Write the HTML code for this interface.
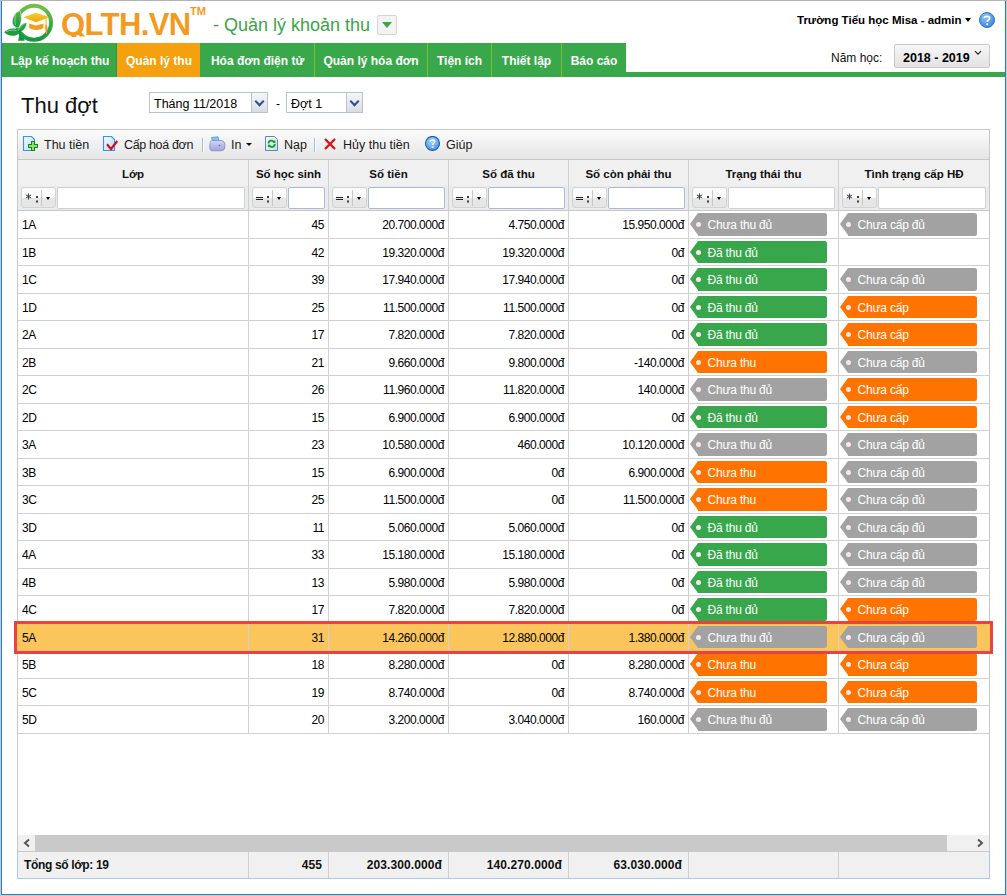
<!DOCTYPE html>
<html><head><meta charset="utf-8"><title>QLTH</title>
<style>
*{box-sizing:border-box;margin:0;padding:0}
html,body{width:1007px;height:896px;overflow:hidden;background:#fff;font-family:"Liberation Sans",sans-serif;color:#000}
.a{position:absolute}
/* frame */
#fT{left:0;top:0;width:1007px;height:1px;background:#b4b4b4}
#fL0{left:0;top:1px;width:1px;height:895px;background:#d3c8bd}
#fL1{left:1px;top:1px;width:1px;height:894px;background:#1883d7}
#fR0{left:1006px;top:1px;width:1px;height:895px;background:#d3c8bd}
#fR1{left:1005px;top:1px;width:1px;height:894px;background:#1883d7}
#fB0{left:0;top:895px;width:1007px;height:1px;background:#d3c8bd}
#fB1{left:1px;top:894px;width:1005px;height:1px;background:#1883d7}
/* header */
#brand{left:61px;top:5.3px;height:32px;overflow:hidden;font-weight:bold;font-size:31px;line-height:40px;color:#f39a22;letter-spacing:-0.6px;white-space:nowrap}
#tm{left:190px;top:5px;font-weight:bold;font-size:11px;line-height:12px;color:#f39a22}
#sub{left:213px;top:12px;font-size:18px;line-height:26px;color:#3aa548;white-space:nowrap}
#subbtn{left:377px;top:15px;width:20px;height:20px;border:1px solid #d4d4d4;background:#f3f3f3;border-radius:2px}
#subbtn:after{content:"";position:absolute;left:4px;top:6px;border-left:5.5px solid transparent;border-right:5.5px solid transparent;border-top:6px solid #3aa548}
#user{left:797px;top:12px;font-weight:bold;font-size:11.5px;line-height:16px;white-space:nowrap}
#usertri{left:965px;top:18px;border-left:3.5px solid transparent;border-right:3.5px solid transparent;border-top:4px solid #000;width:0;height:0}
/* tabs */
#tabs{left:2px;top:43px;height:34px;width:1003px}
.tab{position:absolute;top:43px;height:34px;background:#39a84a;color:#fff;font-weight:bold;font-size:12px;line-height:35px;text-align:center;white-space:nowrap;padding-left:1px;padding-top:1px}
.tab.on{background:#f5a00f}
.tsep{position:absolute;top:43px;width:1px;height:34px;background:#7cbf34}
#gbar{left:2px;top:72px;width:1003px;height:5px;background:#39a84a}
#nh{left:831px;top:49.5px;font-size:12px;line-height:16px;white-space:nowrap;color:#111}
#nhbox{left:894px;top:44px;width:96px;height:24px;padding-top:1.5px;border:1px solid #c9c9c9;border-radius:2px;background:linear-gradient(#f6f6f6,#e3e3e3);font-weight:bold;font-size:12.5px;line-height:22px;padding-left:8px;white-space:nowrap}
#nhchev{left:974px;top:50px}
/* title */
#title{left:21px;top:92px;font-size:22px;line-height:28px;color:#111;white-space:nowrap}
.combo{position:absolute;height:21px;border:1px solid #b9c3cf;background:#fff;font-size:12.5px;line-height:19px;padding-left:4px;padding-top:2px;white-space:nowrap;color:#000}
.cbtn{position:absolute;top:-1px;margin-top:0;right:-1px;width:17px;height:21px;border:1px solid #b9c3cf;background:linear-gradient(#f5f6f8,#d9dde3)}
.cbtn:after{content:"";position:absolute;left:4px;top:5px;width:5px;height:5px;border-right:2px solid #2b4f91;border-bottom:2px solid #2b4f91;transform:rotate(45deg)}
#dash{left:276px;top:96px;font-size:12px;line-height:16px}
/* grid */
#gridL{left:17px;top:129px;width:1px;height:723px;background:#c8c8c8}
#gridR{left:989px;top:129px;width:1px;height:723px;background:#c8c8c8}
#tb{left:17px;top:129px;width:973px;height:31px;border:1px solid #c8c8c8;background:linear-gradient(#fbfbfb,#e5e5e5)}
.tbt{position:absolute;top:137px;font-size:12.5px;line-height:16px;color:#1a1a1a;white-space:nowrap;letter-spacing:0px}
.tbsep{position:absolute;top:138px;width:1px;height:14px;background:#93c4f0;box-shadow:1px 0 0 #fff}
#hdr{left:18px;top:160px;width:971px;height:50px;background:#f0f0f0}
#frow{left:18px;top:186px;width:971px;height:24px;background:#eaebed}
#hdrb{left:17px;top:210px;width:973px;height:1px;background:#c8c8c8}
.hc{position:absolute;top:165px;font-weight:bold;font-size:11.5px;line-height:18px;text-align:center;white-space:nowrap;color:#111}
.vl{position:absolute;top:160px;width:1px;background:#d0d0d0}
.op{position:absolute;top:187px;width:35px;height:21px;border:1px solid #d2d2d2;border-radius:3px;background:linear-gradient(#fbfbfb 0,#fbfbfb 50%,#e6e6e6 50%,#e6e6e6 100%);color:#222}
.op b{position:absolute;left:18.5px;top:2px;width:1px;height:16px;background:#c8c8c8}
.op i{position:absolute;left:23.6px;top:9px;border-left:2.8px solid transparent;border-right:2.8px solid transparent;border-top:3.3px solid #000}
.op .eq{position:absolute;left:2.5px;top:9px;width:7px;height:3.2px;border-top:1.1px solid #222;border-bottom:1.1px solid #222}
.op svg{position:absolute;left:2.5px;top:4.5px}
.op .co{position:absolute;left:14.2px;top:8px;width:2px;height:2px;background:#3a3a3a;box-shadow:0 4.5px 0 #3a3a3a}
.fi{position:absolute;top:187px;height:21.5px;border:1px solid #b3b8d2;border-radius:2px;background:#fff}
.fi.gy{border-color:#d0d0d0}
.row{position:absolute;left:17px;width:973px;height:27.5px;border-bottom:1px solid #d0d0d0}
.row.sel{background:#fcc55c;border-bottom:1px dotted #bcc5d0}
.c{position:absolute;top:0;height:26.5px;line-height:26.5px;padding-top:1px;font-size:12px;letter-spacing:-0.45px;white-space:nowrap;color:#000;border-right:1px solid #d0d0d0}
.c.l{padding-left:4px}
.c.r{text-align:right;padding-right:4px}
.tag{position:absolute;top:2.3px;height:22.5px;width:129px;color:#fff;font-size:12px;letter-spacing:-0.2px;line-height:22px;padding-left:9.5px;padding-top:1px;white-space:nowrap;border-radius:0 2.5px 2.5px 0}
.tag:before{content:"";position:absolute;left:-8px;top:0;border-top:11.25px solid transparent;border-bottom:11.25px solid transparent;border-right:8px solid currentColor}
.tag i{position:absolute;left:-2.3px;top:9px;width:5px;height:5px;border-radius:50%;background:#f8e6ea}
.tag.g{background:#a2a2a2}
.tag.g:before{border-right-color:#a2a2a2}
.tag.v{background:#38a64b}
.tag.v:before{border-right-color:#38a64b}
.tag.o{background:#ff7400}
.tag.o:before{border-right-color:#ff7400}
#redbox{left:14px;top:621px;width:979px;height:33px;border:3px solid #e8433d}
/* scrollbar & footer */
#sb{left:18px;top:835px;width:971px;height:16px;background:#f0f0f0}
#sbth{left:35px;top:835px;width:912px;height:16px;background:#c9c9c9}
#sbline{left:17px;top:851px;width:973px;height:1px;background:#c8c8c8}
#ft{left:17px;top:852px;width:973px;height:27px;background:#f0f0f0;border-left:1px solid #a9c8ee;border-bottom:1px solid #a9c8ee;border-right:1px solid #a9c8ee}
.fc{position:absolute;top:852px;height:26px;line-height:26px;font-weight:bold;font-size:12px;letter-spacing:0.1px;white-space:nowrap;color:#111}
.fv{position:absolute;top:852px;width:1px;height:26px;background:#d0d0d0}

</style></head><body>
<div class="a" id="fT"></div><div class="a" id="fL0"></div><div class="a" id="fL1"></div><div class="a" id="fR0"></div><div class="a" id="fR1"></div><div class="a" id="fB0"></div><div class="a" id="fB1"></div>

<svg class="a" style="left:0;top:0" width="60" height="45" viewBox="0 0 60 45">
  <defs>
    <linearGradient id="lg1" x1="0" y1="0" x2="0" y2="1"><stop offset="0" stop-color="#72bf47"/><stop offset="1" stop-color="#119a3e"/></linearGradient>
    <linearGradient id="lf" x1="0" y1="0" x2="0" y2="1"><stop offset="0" stop-color="#5bb54a"/><stop offset="1" stop-color="#13963f"/></linearGradient>
    <linearGradient id="cap" x1="0" y1="0" x2="0" y2="1"><stop offset="0" stop-color="#f3d21d"/><stop offset="1" stop-color="#f2a11b"/></linearGradient>
  </defs>
  <circle cx="34" cy="22.7" r="17" fill="none" stroke="url(#lg1)" stroke-width="4"/>
  <path d="M19.6 10.4 C14 13 11.5 19 12.5 23.5 C13.3 26.5 16 27.8 18.5 27.5 C21.5 24 22.5 16 19.6 10.4 Z" fill="url(#lf)" stroke="#fff" stroke-width="0.5"/>
  <path d="M4 32.3 C7 29 12 27.8 16 28.8 C17.5 29.3 18.5 31 19.5 33.5 C15 36.5 9 37.2 4 32.3 Z" fill="#1f9c42"/>
  <path d="M26.8 22.8 C23 23 19.5 25.5 18.5 30.5 C19 31.5 20 32 21 32 C24.5 30 26.5 26.5 26.8 22.8 Z" fill="#22a044" stroke="#fff" stroke-width="0.4"/>
  <path d="M17.5 31 C19 33 20 35 18 40.7 L24.5 40.7 C24 37 22 34 20.5 30 Z" fill="#129640"/>
  <path d="M15.3 14.5 C14.6 18 14.8 22 15.6 25" fill="none" stroke="#cdebc0" stroke-width="0.6"/>
  <path d="M6 31.6 C9.5 30 13.5 29.8 16.5 30.6" fill="none" stroke="#cdebc0" stroke-width="0.6"/>
  <path d="M20 28.5 C21.3 26 23 24.5 25 23.7" fill="none" stroke="#cdebc0" stroke-width="0.5"/>
  <path d="M23.5 17.3 L35.8 12.8 L49.5 17.3 L35.8 22.3 Z" fill="url(#cap)"/>
  <path d="M29.2 23.5 L35.8 25.5 L43.5 23.5 L43.5 28 C40 30.5 33 30.5 29.2 28 Z" fill="#f59c1c"/>
  <path d="M46 18 L46.3 27" stroke="#f2b31c" stroke-width="1"/>
  <path d="M45 27 L47.5 27 L47 34 L46 34 Z" fill="#f39a1e"/>
  <circle cx="46.2" cy="26" r="1.2" fill="#f2a91c"/>
</svg>
<div class="a" id="brand">QLTH.VN</div>
<div class="a" id="tm">TM</div>
<svg class="a" style="left:0;top:0" width="90" height="40" viewBox="0 0 90 40"><path d="M77 32 L80.5 31 L85 36.4 L79.8 36.4 Z" fill="#f39a22"/></svg>
<div class="a" id="sub">- Quản lý khoản thu</div>
<div class="a" id="subbtn"></div>
<div class="a" id="user">Trường Tiểu học Misa - admin</div>
<div class="a" id="usertri"></div>
<svg class="a" style="left:978px;top:11px" width="18" height="18" viewBox="0 0 18 18">
  <defs><radialGradient id="hb" cx="0.4" cy="0.3" r="0.8"><stop offset="0" stop-color="#8fc4f7"/><stop offset="1" stop-color="#2f7fdc"/></radialGradient></defs>
  <circle cx="9" cy="9" r="7.5" fill="url(#hb)" stroke="#2a72cc" stroke-width="1"/>
  <path d="M6.3 7 C6.3 4.8 11.7 4.8 11.7 7.2 C11.7 9 9.2 9 9.2 10.8" fill="none" stroke="#fff" stroke-width="1.7"/>
  <circle cx="9.2" cy="13.3" r="1.1" fill="#fff"/>
</svg>

<div class="a" id="gbar"></div>
<div class="tab" style="left:2px;width:115px">Lập kế hoạch thu</div>
<div class="tab on" style="left:117px;width:83px">Quản lý thu</div>
<div class="tab" style="left:200px;width:114px">Hóa đơn điện tử</div>
<div class="tab" style="left:314px;width:113px">Quản lý hóa đơn</div>
<div class="tab" style="left:427px;width:64px">Tiện ích</div>
<div class="tab" style="left:491px;width:70px">Thiết lập</div>
<div class="tab" style="left:561px;width:65px">Báo cáo</div>
<div class="tsep" style="left:116px;background:#24984a"></div>
<div class="tsep" style="left:314px"></div>
<div class="tsep" style="left:427px"></div>
<div class="tsep" style="left:491px"></div>
<div class="tsep" style="left:561px"></div>

<div class="a" id="nh">Năm học:</div>
<div class="a" id="nhbox">2018 - 2019</div>
<svg class="a" id="nhchev" width="8" height="6" viewBox="0 0 8 6"><path d="M1 1.2 L4 4.2 L7 1.2" fill="none" stroke="#222" stroke-width="1.2"/></svg>

<div class="a" id="title">Thu đợt</div>
<div class="combo" style="left:149px;top:92px;width:119px">Tháng 11/2018<div class="cbtn"></div></div>
<div class="a" id="dash">-</div>
<div class="combo" style="left:286px;top:92px;width:77px">Đợt 1<div class="cbtn"></div></div>

<!-- grid -->
<div class="a" id="tb"></div>
<svg class="a" style="left:20px;top:132px" width="24" height="24" viewBox="0 0 24 24">
  <defs><linearGradient id="dg" x1="0" y1="0" x2="1" y2="1"><stop offset="0" stop-color="#f4fbff"/><stop offset="1" stop-color="#b9d9f5"/></linearGradient></defs>
  <path d="M3.5 4.5 H11.5 L14.5 7.5 V18.5 H3.5 Z" fill="url(#dg)" stroke="#3893e0" stroke-width="1.1"/>
  <path d="M11.5 9.5 H14.5 V12.5 H17.5 V15.5 H14.5 V18.5 H11.5 V15.5 H8.5 V12.5 H11.5 Z" fill="#8fdc7b" stroke="#128a12" stroke-width="1.1" shape-rendering="crispEdges"/>
</svg>
<div class="tbt" style="left:44px">Thu tiền</div>
<svg class="a" style="left:100px;top:132px" width="24" height="24" viewBox="0 0 24 24">
  <path d="M3.5 4.5 H11.5 L14.5 7.5 V18.5 H3.5 Z" fill="url(#dg)" stroke="#3893e0" stroke-width="1.1"/>
  <path d="M7 12.3 L11 17 L17.3 9" fill="none" stroke="#c8101e" stroke-width="2.1"/>
</svg>
<div class="tbt" style="left:124px;letter-spacing:-0.35px">Cấp hoá đơn</div>
<div class="tbsep" style="left:202px"></div>
<svg class="a" style="left:200px;top:132px" width="30" height="24" viewBox="0 0 30 24">
  <defs><linearGradient id="pg" x1="0" y1="0" x2="0" y2="1"><stop offset="0" stop-color="#d4d6f6"/><stop offset="1" stop-color="#9ea2dc"/></linearGradient></defs>
  <path d="M11.5 5.5 L18 4.8 L19.5 9.5 L13 10.2 Z" fill="#7cc6f0" stroke="#4e9fd6" stroke-width="0.8"/>
  <path d="M10.5 10 C10 9 12 8.5 15 8.5 L21 8.5 C24 8.5 25 10.5 25 13.5 C25 17 24 18.8 21 18.8 L12 18.8 C10 18.8 9.8 17 9.8 14.5 C9.8 12 10.2 10.8 10.5 10 Z" fill="url(#pg)" stroke="#8489c9" stroke-width="0.8"/>
  <circle cx="19.5" cy="13.5" r="0.8" fill="#5a5fa8"/>
</svg>
<div class="tbt" style="left:231px">In</div>
<div class="a" style="left:246px;top:143px;border-left:3px solid transparent;border-right:3px solid transparent;border-top:3.5px solid #111;width:0;height:0"></div>
<svg class="a" style="left:260px;top:132px" width="24" height="24" viewBox="0 0 24 24">
  <defs><linearGradient id="rg" x1="0" y1="0" x2="1" y2="1"><stop offset="0" stop-color="#f6fbff"/><stop offset="1" stop-color="#c3ddf3"/></linearGradient></defs>
  <path d="M5.5 4.5 H14.5 L17.5 7.5 V18.5 H5.5 Z" fill="url(#rg)" stroke="#6d82aa" stroke-width="1"/>
  <path d="M8.5 11.5 C8.5 8.5 12.5 7.5 14 10" fill="none" stroke="#14a01e" stroke-width="1.8"/>
  <path d="M12.3 10.6 L15.4 11.2 L15.4 8 Z" fill="#14a01e"/>
  <path d="M14.8 12 C14.8 15 10.8 16 9.3 13.5" fill="none" stroke="#14a01e" stroke-width="1.8"/>
  <path d="M11 13 L7.9 12.4 L7.9 15.6 Z" fill="#14a01e"/>
</svg>
<div class="tbt" style="left:284px">Nạp</div>
<div class="tbsep" style="left:314px"></div>
<svg class="a" style="left:323px;top:137px" width="14" height="14" viewBox="0 0 14 14">
  <path d="M2 2 L12 12 M12 2 L2 12" stroke="#d9141b" stroke-width="2.4"/>
</svg>
<div class="tbt" style="left:343px">Hủy thu tiền</div>
<svg class="a" style="left:424px;top:136px" width="17" height="16" viewBox="0 0 17 16">
  <defs><radialGradient id="hb2" cx="0.45" cy="0.35" r="0.7"><stop offset="0" stop-color="#a9d3fb"/><stop offset="1" stop-color="#3f8ee6"/></radialGradient></defs>
  <circle cx="8.5" cy="7.4" r="7" fill="url(#hb2)" stroke="#0c5ebd" stroke-width="1.1"/>
  <path d="M6.3 5.6 C6.3 3.6 10.7 3.6 10.7 5.7 C10.7 7.2 8.6 7.3 8.6 9" fill="none" stroke="#fff" stroke-width="1.5"/>
  <rect x="7.7" y="10.3" width="1.8" height="1.6" fill="#fff"/>
</svg>
<div class="tbt" style="left:446px">Giúp</div>

<div class="a" id="hdr"></div>
<div class="a" id="frow"></div>
<div class="a" id="gridL"></div><div class="a" id="gridR"></div>
<div class="hc" style="left:18px;width:230px">Lớp</div>
<div class="hc" style="left:249px;width:79px">Số học sinh</div>
<div class="hc" style="left:329px;width:119px">Số tiền</div>
<div class="hc" style="left:449px;width:119px">Số đã thu</div>
<div class="hc" style="left:569px;width:119px">Số còn phải thu</div>
<div class="hc" style="left:689px;width:149px">Trạng thái thu</div>
<div class="hc" style="left:839px;width:150px">Tình trạng cấp HĐ</div>
<div class="vl" style="left:248px;height:50px"></div>
<div class="vl" style="left:328px;height:50px"></div>
<div class="vl" style="left:448px;height:50px"></div>
<div class="vl" style="left:568px;height:50px"></div>
<div class="vl" style="left:688px;height:50px"></div>
<div class="vl" style="left:838px;height:50px"></div>

<div class="op" style="left:21px"><svg width="7" height="7" viewBox="0 0 7 7"><path d="M3.5 0.5 V6.5 M0.9 2 L6.1 5 M6.1 2 L0.9 5" stroke="#3a3a5a" stroke-width="1"/></svg><span class="co"></span><b></b><i></i></div><div class="fi gy" style="left:57px;width:188px"></div>
<div class="op" style="left:252px"><span class="eq"></span><span class="co"></span><b></b><i></i></div><div class="fi" style="left:288px;width:37px"></div>
<div class="op" style="left:332px"><span class="eq"></span><span class="co"></span><b></b><i></i></div><div class="fi" style="left:368px;width:77px"></div>
<div class="op" style="left:452px"><span class="eq"></span><span class="co"></span><b></b><i></i></div><div class="fi" style="left:488px;width:77px"></div>
<div class="op" style="left:572px"><span class="eq"></span><span class="co"></span><b></b><i></i></div><div class="fi" style="left:608px;width:77px"></div>
<div class="op" style="left:692px"><svg width="7" height="7" viewBox="0 0 7 7"><path d="M3.5 0.5 V6.5 M0.9 2 L6.1 5 M6.1 2 L0.9 5" stroke="#3a3a5a" stroke-width="1"/></svg><span class="co"></span><b></b><i></i></div><div class="fi gy" style="left:728px;width:107px"></div>
<div class="op" style="left:842px"><svg width="7" height="7" viewBox="0 0 7 7"><path d="M3.5 0.5 V6.5 M0.9 2 L6.1 5 M6.1 2 L0.9 5" stroke="#3a3a5a" stroke-width="1"/></svg><span class="co"></span><b></b><i></i></div><div class="fi gy" style="left:878px;width:108px"></div>
<div class="a" id="hdrb"></div>

<div class="row" style="top:211.0px">
<div class="c l" style="left:1px;width:231px">1A</div>
<div class="c r" style="left:232px;width:80px">45</div>
<div class="c r" style="left:312px;width:120px">20.700.000đ</div>
<div class="c r" style="left:432px;width:120px">4.750.000đ</div>
<div class="c r" style="left:552px;width:120px">15.950.000đ</div>
<div class="c" style="left:672px;width:150px"></div>
<div class="tag g" style="left:681px"><i></i>Chưa thu đủ</div>
<div class="tag g" style="left:831px"><i></i>Chưa cấp đủ</div>
</div>
<div class="row" style="top:238.5px">
<div class="c l" style="left:1px;width:231px">1B</div>
<div class="c r" style="left:232px;width:80px">42</div>
<div class="c r" style="left:312px;width:120px">19.320.000đ</div>
<div class="c r" style="left:432px;width:120px">19.320.000đ</div>
<div class="c r" style="left:552px;width:120px">0đ</div>
<div class="c" style="left:672px;width:150px"></div>
<div class="tag v" style="left:681px"><i></i>Đã thu đủ</div>
</div>
<div class="row" style="top:266.0px">
<div class="c l" style="left:1px;width:231px">1C</div>
<div class="c r" style="left:232px;width:80px">39</div>
<div class="c r" style="left:312px;width:120px">17.940.000đ</div>
<div class="c r" style="left:432px;width:120px">17.940.000đ</div>
<div class="c r" style="left:552px;width:120px">0đ</div>
<div class="c" style="left:672px;width:150px"></div>
<div class="tag v" style="left:681px"><i></i>Đã thu đủ</div>
<div class="tag g" style="left:831px"><i></i>Chưa cấp đủ</div>
</div>
<div class="row" style="top:293.5px">
<div class="c l" style="left:1px;width:231px">1D</div>
<div class="c r" style="left:232px;width:80px">25</div>
<div class="c r" style="left:312px;width:120px">11.500.000đ</div>
<div class="c r" style="left:432px;width:120px">11.500.000đ</div>
<div class="c r" style="left:552px;width:120px">0đ</div>
<div class="c" style="left:672px;width:150px"></div>
<div class="tag v" style="left:681px"><i></i>Đã thu đủ</div>
<div class="tag o" style="left:831px"><i></i>Chưa cấp</div>
</div>
<div class="row" style="top:321.0px">
<div class="c l" style="left:1px;width:231px">2A</div>
<div class="c r" style="left:232px;width:80px">17</div>
<div class="c r" style="left:312px;width:120px">7.820.000đ</div>
<div class="c r" style="left:432px;width:120px">7.820.000đ</div>
<div class="c r" style="left:552px;width:120px">0đ</div>
<div class="c" style="left:672px;width:150px"></div>
<div class="tag v" style="left:681px"><i></i>Đã thu đủ</div>
<div class="tag o" style="left:831px"><i></i>Chưa cấp</div>
</div>
<div class="row" style="top:348.5px">
<div class="c l" style="left:1px;width:231px">2B</div>
<div class="c r" style="left:232px;width:80px">21</div>
<div class="c r" style="left:312px;width:120px">9.660.000đ</div>
<div class="c r" style="left:432px;width:120px">9.800.000đ</div>
<div class="c r" style="left:552px;width:120px">-140.000đ</div>
<div class="c" style="left:672px;width:150px"></div>
<div class="tag o" style="left:681px"><i></i>Chưa thu</div>
<div class="tag g" style="left:831px"><i></i>Chưa cấp đủ</div>
</div>
<div class="row" style="top:376.0px">
<div class="c l" style="left:1px;width:231px">2C</div>
<div class="c r" style="left:232px;width:80px">26</div>
<div class="c r" style="left:312px;width:120px">11.960.000đ</div>
<div class="c r" style="left:432px;width:120px">11.820.000đ</div>
<div class="c r" style="left:552px;width:120px">140.000đ</div>
<div class="c" style="left:672px;width:150px"></div>
<div class="tag g" style="left:681px"><i></i>Chưa thu đủ</div>
<div class="tag o" style="left:831px"><i></i>Chưa cấp</div>
</div>
<div class="row" style="top:403.5px">
<div class="c l" style="left:1px;width:231px">2D</div>
<div class="c r" style="left:232px;width:80px">15</div>
<div class="c r" style="left:312px;width:120px">6.900.000đ</div>
<div class="c r" style="left:432px;width:120px">6.900.000đ</div>
<div class="c r" style="left:552px;width:120px">0đ</div>
<div class="c" style="left:672px;width:150px"></div>
<div class="tag v" style="left:681px"><i></i>Đã thu đủ</div>
<div class="tag o" style="left:831px"><i></i>Chưa cấp</div>
</div>
<div class="row" style="top:431.0px">
<div class="c l" style="left:1px;width:231px">3A</div>
<div class="c r" style="left:232px;width:80px">23</div>
<div class="c r" style="left:312px;width:120px">10.580.000đ</div>
<div class="c r" style="left:432px;width:120px">460.000đ</div>
<div class="c r" style="left:552px;width:120px">10.120.000đ</div>
<div class="c" style="left:672px;width:150px"></div>
<div class="tag g" style="left:681px"><i></i>Chưa thu đủ</div>
<div class="tag g" style="left:831px"><i></i>Chưa cấp đủ</div>
</div>
<div class="row" style="top:458.5px">
<div class="c l" style="left:1px;width:231px">3B</div>
<div class="c r" style="left:232px;width:80px">15</div>
<div class="c r" style="left:312px;width:120px">6.900.000đ</div>
<div class="c r" style="left:432px;width:120px">0đ</div>
<div class="c r" style="left:552px;width:120px">6.900.000đ</div>
<div class="c" style="left:672px;width:150px"></div>
<div class="tag o" style="left:681px"><i></i>Chưa thu</div>
<div class="tag g" style="left:831px"><i></i>Chưa cấp đủ</div>
</div>
<div class="row" style="top:486.0px">
<div class="c l" style="left:1px;width:231px">3C</div>
<div class="c r" style="left:232px;width:80px">25</div>
<div class="c r" style="left:312px;width:120px">11.500.000đ</div>
<div class="c r" style="left:432px;width:120px">0đ</div>
<div class="c r" style="left:552px;width:120px">11.500.000đ</div>
<div class="c" style="left:672px;width:150px"></div>
<div class="tag o" style="left:681px"><i></i>Chưa thu</div>
<div class="tag g" style="left:831px"><i></i>Chưa cấp đủ</div>
</div>
<div class="row" style="top:513.5px">
<div class="c l" style="left:1px;width:231px">3D</div>
<div class="c r" style="left:232px;width:80px">11</div>
<div class="c r" style="left:312px;width:120px">5.060.000đ</div>
<div class="c r" style="left:432px;width:120px">5.060.000đ</div>
<div class="c r" style="left:552px;width:120px">0đ</div>
<div class="c" style="left:672px;width:150px"></div>
<div class="tag v" style="left:681px"><i></i>Đã thu đủ</div>
<div class="tag g" style="left:831px"><i></i>Chưa cấp đủ</div>
</div>
<div class="row" style="top:541.0px">
<div class="c l" style="left:1px;width:231px">4A</div>
<div class="c r" style="left:232px;width:80px">33</div>
<div class="c r" style="left:312px;width:120px">15.180.000đ</div>
<div class="c r" style="left:432px;width:120px">15.180.000đ</div>
<div class="c r" style="left:552px;width:120px">0đ</div>
<div class="c" style="left:672px;width:150px"></div>
<div class="tag v" style="left:681px"><i></i>Đã thu đủ</div>
<div class="tag g" style="left:831px"><i></i>Chưa cấp đủ</div>
</div>
<div class="row" style="top:568.5px">
<div class="c l" style="left:1px;width:231px">4B</div>
<div class="c r" style="left:232px;width:80px">13</div>
<div class="c r" style="left:312px;width:120px">5.980.000đ</div>
<div class="c r" style="left:432px;width:120px">5.980.000đ</div>
<div class="c r" style="left:552px;width:120px">0đ</div>
<div class="c" style="left:672px;width:150px"></div>
<div class="tag v" style="left:681px"><i></i>Đã thu đủ</div>
<div class="tag g" style="left:831px"><i></i>Chưa cấp đủ</div>
</div>
<div class="row" style="top:596.0px">
<div class="c l" style="left:1px;width:231px">4C</div>
<div class="c r" style="left:232px;width:80px">17</div>
<div class="c r" style="left:312px;width:120px">7.820.000đ</div>
<div class="c r" style="left:432px;width:120px">7.820.000đ</div>
<div class="c r" style="left:552px;width:120px">0đ</div>
<div class="c" style="left:672px;width:150px"></div>
<div class="tag v" style="left:681px"><i></i>Đã thu đủ</div>
<div class="tag o" style="left:831px"><i></i>Chưa cấp</div>
</div>
<div class="row sel" style="top:623.5px">
<div class="c l" style="left:1px;width:231px">5A</div>
<div class="c r" style="left:232px;width:80px">31</div>
<div class="c r" style="left:312px;width:120px">14.260.000đ</div>
<div class="c r" style="left:432px;width:120px">12.880.000đ</div>
<div class="c r" style="left:552px;width:120px">1.380.000đ</div>
<div class="c" style="left:672px;width:150px"></div>
<div class="tag g" style="left:681px"><i></i>Chưa thu đủ</div>
<div class="tag g" style="left:831px"><i></i>Chưa cấp đủ</div>
</div>
<div class="row" style="top:651.0px">
<div class="c l" style="left:1px;width:231px">5B</div>
<div class="c r" style="left:232px;width:80px">18</div>
<div class="c r" style="left:312px;width:120px">8.280.000đ</div>
<div class="c r" style="left:432px;width:120px">0đ</div>
<div class="c r" style="left:552px;width:120px">8.280.000đ</div>
<div class="c" style="left:672px;width:150px"></div>
<div class="tag o" style="left:681px"><i></i>Chưa thu</div>
<div class="tag o" style="left:831px"><i></i>Chưa cấp</div>
</div>
<div class="row" style="top:678.5px">
<div class="c l" style="left:1px;width:231px">5C</div>
<div class="c r" style="left:232px;width:80px">19</div>
<div class="c r" style="left:312px;width:120px">8.740.000đ</div>
<div class="c r" style="left:432px;width:120px">0đ</div>
<div class="c r" style="left:552px;width:120px">8.740.000đ</div>
<div class="c" style="left:672px;width:150px"></div>
<div class="tag o" style="left:681px"><i></i>Chưa thu</div>
<div class="tag o" style="left:831px"><i></i>Chưa cấp</div>
</div>
<div class="row" style="top:706.0px">
<div class="c l" style="left:1px;width:231px">5D</div>
<div class="c r" style="left:232px;width:80px">20</div>
<div class="c r" style="left:312px;width:120px">3.200.000đ</div>
<div class="c r" style="left:432px;width:120px">3.040.000đ</div>
<div class="c r" style="left:552px;width:120px">160.000đ</div>
<div class="c" style="left:672px;width:150px"></div>
<div class="tag g" style="left:681px"><i></i>Chưa thu đủ</div>
<div class="tag g" style="left:831px"><i></i>Chưa cấp đủ</div>
</div>

<div class="a" id="redbox"></div>

<div class="a" id="sb"></div>
<div class="a" id="sbth"></div>
<svg class="a" style="left:22px;top:838px" width="10" height="10" viewBox="0 0 10 10"><path d="M7 1.5 L3 5 L7 8.5" fill="none" stroke="#555" stroke-width="2"/></svg>
<svg class="a" style="left:975px;top:838px" width="10" height="10" viewBox="0 0 10 10"><path d="M3 1.5 L7 5 L3 8.5" fill="none" stroke="#555" stroke-width="2"/></svg>
<div class="a" id="sbline"></div>
<div class="a" id="ft"></div>
<div class="fc" style="left:24px;letter-spacing:-0.35px">Tổng số lớp: 19</div>
<div class="fc" style="left:249px;width:73px;text-align:right">455</div>
<div class="fc" style="left:329px;width:113px;text-align:right">203.300.000đ</div>
<div class="fc" style="left:449px;width:113px;text-align:right">140.270.000đ</div>
<div class="fc" style="left:569px;width:113px;text-align:right">63.030.000đ</div>
<div class="fv" style="left:248px"></div>
<div class="fv" style="left:328px"></div>
<div class="fv" style="left:448px"></div>
<div class="fv" style="left:568px"></div>
<div class="fv" style="left:688px"></div>
<div class="fv" style="left:838px"></div>
</body></html>
